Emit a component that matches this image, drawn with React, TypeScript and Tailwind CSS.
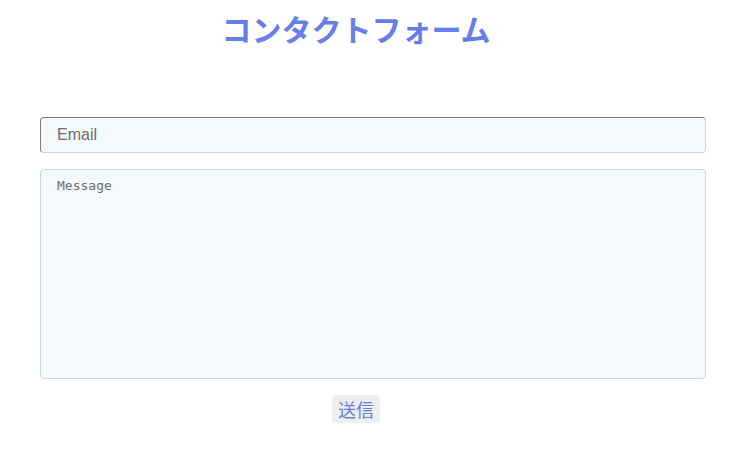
import React, { useState } from 'react'

export default function App() {
  const [email, setEmail] = useState('')
  const [message, setMessage] = useState('')

  return (
    <div className="w-[712px] bg-white px-[40px] pt-[11px]">
      <h1 className="text-center text-[30px] leading-[35px] font-bold text-[#667eea] [font-family:'Noto_Sans_CJK_JP',sans-serif]">
        コンタクトフォーム
      </h1>

      <form className="mt-[71px] flex flex-col items-center" onSubmit={e => e.preventDefault()}>
        <input
          type="email"
          value={email}
          onChange={e => setEmail(e.target.value)}
          placeholder="Email"
          className="w-[666px] h-[36px] shrink-0 self-start px-[16px] rounded-[4px] border border-t-[#7b7b7b] border-l-[#7b7b7b] border-r-[#c6d3df] border-b-[#c6d3df] bg-[#f5f9fc] text-[16px] text-[#333] placeholder:text-[#6e6e6e] outline-none [font-family:'Liberation_Sans',Arial,sans-serif]"
        />
        <textarea
          value={message}
          onChange={e => setMessage(e.target.value)}
          placeholder="Message"
          className="mt-[16px] w-[666px] h-[210px] shrink-0 self-start px-[16px] py-[8px] rounded-[4px] border border-[#c9d5e0] bg-[#f5f9fc] text-[13px] leading-[16px] text-[#333] placeholder:text-[#6e6e6e] outline-none resize-none [font-family:'DejaVu_Sans_Mono',monospace]"
        />
        <button
          type="submit"
          className="mt-[16px] h-[28px] px-[6px] rounded-[4px] bg-[#efefef] text-[18px] leading-[28px] text-[#667eea] [font-family:'Noto_Sans_CJK_JP',sans-serif]"
        >
          送信
        </button>
      </form>
    </div>
  )
}
